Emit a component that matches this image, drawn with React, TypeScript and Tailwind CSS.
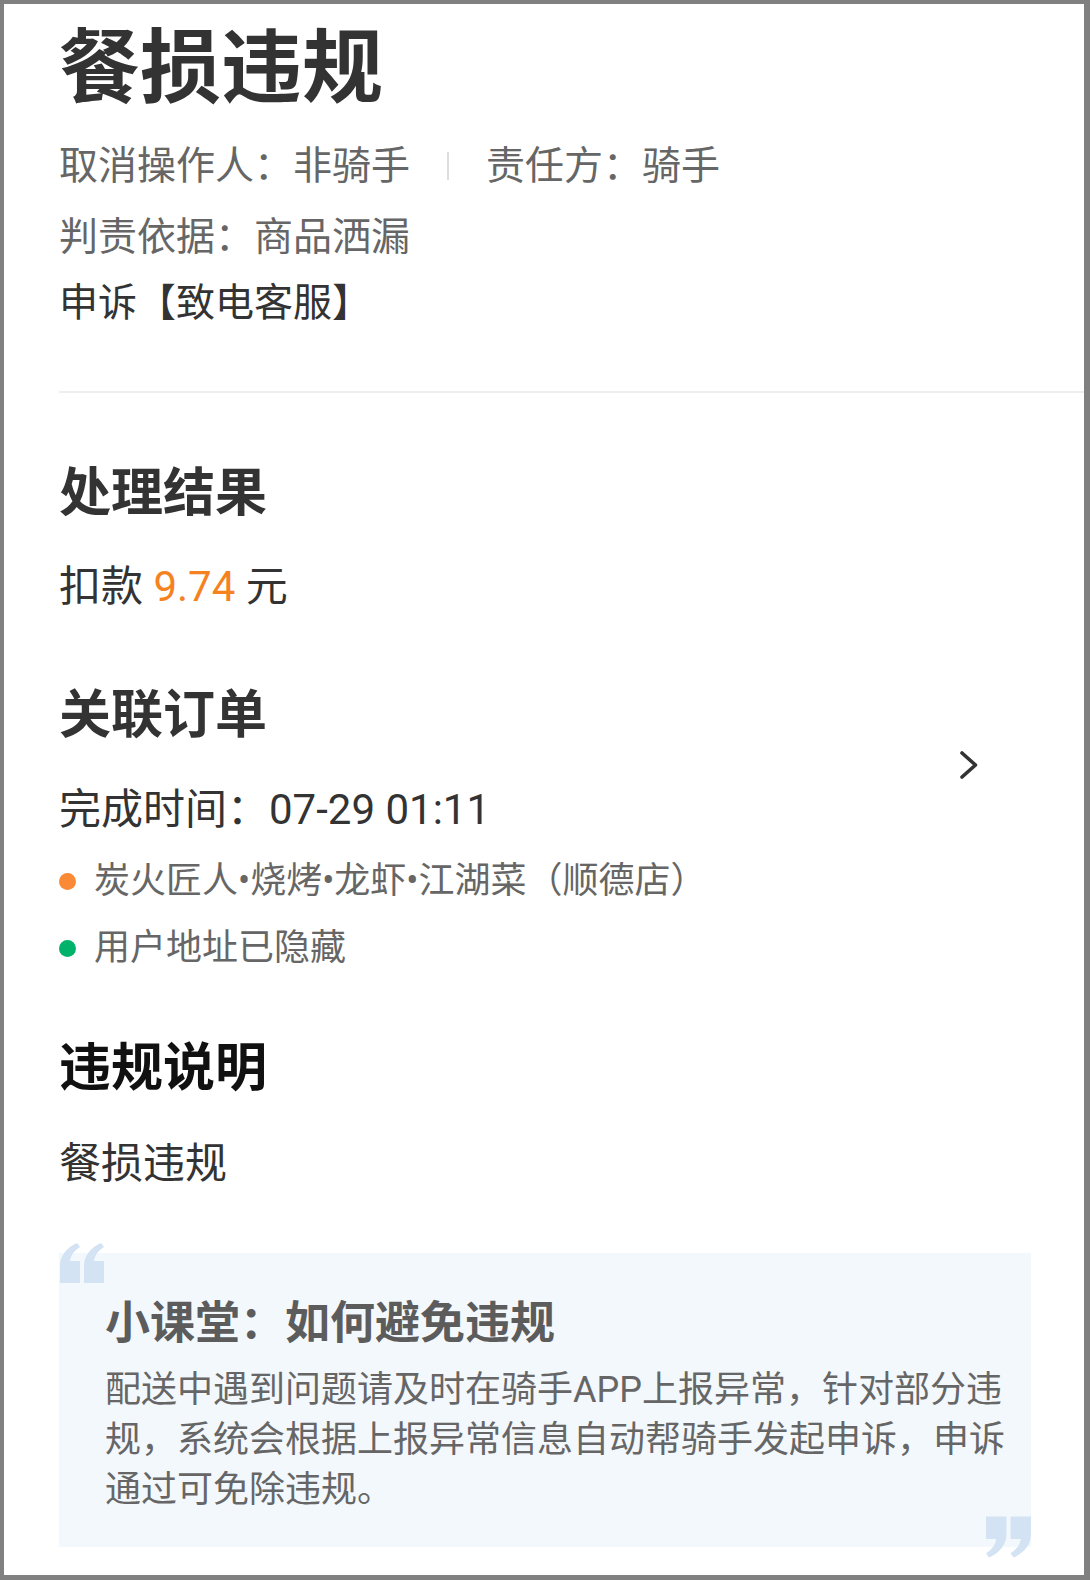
const font = "font-['Roboto','Noto_Sans_CJK_SC',sans-serif]";

function OpenQuote({ className }: { className?: string }) {
  return (
    <svg viewBox="0 0 44 40" className={className} fill="currentColor">
      <path d="M0 40 L0 23 C0 13 6 5 17 0 L20 4 C14 8 11 12 10 18 L20 18 L20 40 Z" />
      <path d="M24 40 L24 23 C24 13 30 5 41 0 L44 4 C38 8 35 12 34 18 L44 18 L44 40 Z" />
    </svg>
  );
}

function Dot({ color }: { color: string }) {
  return <span className={`inline-block w-[17px] h-[17px] rounded-full shrink-0 ${color}`} />;
}

export default function App() {
  return (
    <div className={`w-[1090px] h-[1580px] bg-[#808080] pt-[4px] pl-[4px] pr-[6px] pb-[5px] ${font}`}>
      <div className="h-full bg-white overflow-hidden pt-[25px] pl-[55px]">
        {/* header */}
        <h1 className="text-[81px] leading-[80px] font-bold text-[#333333]">餐损违规</h1>
        <div className="mt-[32px] flex items-center text-[39px] leading-[50px] text-[#666666]">
          <span>取消操作人：非骑手</span>
          <span className="mx-[37px] w-[2px] h-[28px] bg-[#dddddd]" />
          <span>责任方：骑手</span>
        </div>
        <p className="mt-[21px] text-[39px] leading-[50px] text-[#666666]">判责依据：商品洒漏</p>
        <p className="mt-[16px] text-[39px] leading-[50px] text-[#333333]">申诉【致电客服】</p>

        <div className="mt-[63px] h-[2px] bg-[#eeeeee]" />

        {/* result */}
        <h2 className="mt-[71px] text-[52px] leading-[60px] font-bold text-[#333333]">处理结果</h2>
        <p className="mt-[38px] text-[42px] leading-[50px] text-[#333333]">
          扣款 <span className="text-[#f5821f]">9.74</span> 元
        </p>

        {/* order */}
        <div className="mt-[74px] flex items-center justify-between pr-[105px]">
          <div>
            <h2 className="text-[52px] leading-[60px] font-bold text-[#333333]">关联订单</h2>
            <p className="mt-[39px] text-[42px] leading-[50px] text-[#333333]">完成时间：07-29 01:11</p>
          </div>
          <svg viewBox="0 0 20 30" className="w-[20px] h-[30px] mt-[9px]" fill="none" stroke="#333333" strokeWidth="3.6" strokeLinecap="round" strokeLinejoin="round">
            <path d="M3 3 L16.5 15 L3 27" />
          </svg>
        </div>
        <div className="mt-[23px] flex items-center gap-[18px] text-[36px] leading-[46px] text-[#666666]">
          <Dot color="bg-[#fa8a36]" />
          <span>炭火匠人•烧烤•龙虾•江湖菜（顺德店）</span>
        </div>
        <div className="mt-[21px] flex items-center gap-[18px] text-[36px] leading-[46px] text-[#666666]">
          <Dot color="bg-[#00b26a]" />
          <span>用户地址已隐藏</span>
        </div>

        {/* description */}
        <h2 className="mt-[68px] text-[52px] leading-[60px] font-bold text-[#111111]">违规说明</h2>
        <p className="mt-[40px] text-[42px] leading-[50px] text-[#333333]">餐损违规</p>

        {/* tip box */}
        <div className="relative mt-[64px] w-[972px] bg-[#f3f8fd] pl-[46px] pt-[43px] pb-[32px]">
          <OpenQuote className="absolute left-[1px] top-[-10px] w-[44px] h-[40px] text-[#d3e3f3]" />
          <OpenQuote className="absolute right-[0px] bottom-[-13px] w-[45px] h-[46px] rotate-180 text-[#d3e3f3]" />
          <h3 className="relative text-[45px] leading-[56px] font-bold text-[#5c5c5c]">小课堂：如何避免违规</h3>
          <p className="relative mt-[13px] w-[912px] text-[36px] leading-[50px] text-[#666666]">
            配送中遇到问题请及时在骑手APP上报异常，针对部分违规，系统会根据上报异常信息自动帮骑手发起申诉，申诉通过可免除违规。
          </p>
        </div>
      </div>
    </div>
  );
}
